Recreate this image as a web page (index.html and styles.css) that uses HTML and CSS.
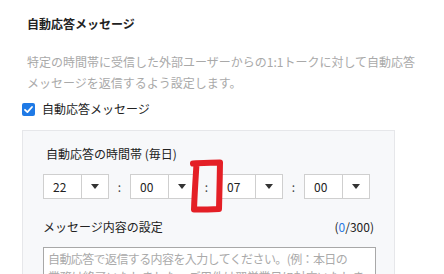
FILE: index.html
```html
<!DOCTYPE html>
<html lang="ja">
<head>
<meta charset="utf-8">
<link rel="stylesheet" href="styles.css">
</head>
<body>
<div class="page">
  <h1 class="title">自動応答メッセージ</h1>
  <p class="desc">特定の時間帯に受信した外部ユーザーからの1:1トークに対して自動応答メッセージを返信するよう設定します。</p>
  <label class="check-row">
    <span class="checkbox"><svg width="13" height="13" viewBox="0 0 13 13"><path d="M3 6.8 L5.4 9.1 L10 4" fill="none" stroke="#fff" stroke-width="1.8" stroke-linecap="round" stroke-linejoin="round"/></svg></span>
    <span class="check-label">自動応答メッセージ</span>
  </label>
  <div class="panel">
    <div class="panel-heading">自動応答の時間帯 (毎日)</div>
    <div class="time-row">
      <div class="select"><span class="val">22</span><span class="arrow"></span></div>
      <span class="colon">:</span>
      <div class="select"><span class="val">00</span><span class="arrow"></span></div>
      <span class="colon">:</span>
      <div class="select"><span class="val">07</span><span class="arrow"></span></div>
      <span class="colon">:</span>
      <div class="select"><span class="val">00</span><span class="arrow"></span></div>
    </div>
    <div class="msg-head">
      <span class="msg-label">メッセージ内容の設定</span>
      <span class="counter">(<span class="count">0</span>/300)</span>
    </div>
    <div class="textarea"><span class="placeholder"><span class="ph-line">自動応答で返信する内容を入力してください。(例：本日の</span><br>業務は終了いたしました。ご用件は翌営業日に対応いたします。)</span></div>
  </div>
</div>
<svg class="annot" width="444" height="274" viewBox="0 0 444 274">
  <path d="M193 163.5 C203 163 212 162.5 220 162.5 C219.8 178 219.3 194 219 209 C211 209.2 202 209.5 194 209.5 C194.5 195 195.5 180 196.5 164" fill="none" stroke="#e41f26" stroke-width="6" stroke-linecap="round" stroke-linejoin="round"/>
</svg>
</body>
</html>
```

FILE: styles.css
```css
* { box-sizing: border-box; }
html, body { margin: 0; padding: 0; background: #fff; }
body {
  font-family: "Noto Sans CJK JP", "Noto Sans", sans-serif;
  font-size: 12px;
  line-height: 16px;
  color: #333;
  width: 444px;
  height: 274px;
  overflow: hidden;
  position: relative;
}
.page { padding: 16px 0 0 22px; }
.title {
  margin: 0 0 0 5px;
  font-size: 12px;
  line-height: 16px;
  font-weight: 700;
  color: #222;
}
.desc {
  margin: 19px 0 0 5px;
  width: 396px;
  line-height: 21px;
  color: #a9a9a9;
}
.check-row {
  display: flex;
  align-items: center;
  gap: 7px;
  margin-top: 8px;
  height: 16px;
}
.checkbox {
  width: 13px;
  height: 13px;
  border-radius: 2px;
  background: #1f7ae6;
  display: flex;
}
.check-label { color: #222; }
.panel {
  margin-top: 13px;
  width: 373px;
  height: 200px;
  background: #f7f8fa;
  border: 1px solid #e6e7ea;
  padding: 15px 18px 0 20px;
}
.panel-heading { padding-left: 3px; color: #222; }
.time-row {
  display: flex;
  margin-top: 12px;
  height: 25px;
}
.select {
  display: flex;
  width: 66px;
  height: 25px;
  background: #fff;
  border: 1px solid #cfcfcf;
}
.val {
  width: 37px;
  padding-left: 9px;
  line-height: 23px;
  color: #222;
}
.arrow {
  flex: 1;
  border-left: 1px solid #cfcfcf;
  display: flex;
  align-items: center;
  justify-content: center;
}
.arrow::before {
  content: "";
  width: 0;
  height: 0;
  border-left: 4px solid transparent;
  border-right: 4px solid transparent;
  border-top: 5px solid #333;
}
.colon {
  width: 21px;
  text-align: center;
  line-height: 25px;
  color: #444;
}
.msg-head {
  display: flex;
  justify-content: space-between;
  margin-top: 20px;
  padding-right: 2px;
  color: #222;
}
.count { color: #2a7ae2; }
.textarea {
  margin-top: 12px;
  height: 60px;
  background: #fff;
  border: 1px solid #a8a8a8;
  padding: 2px 2px 2px 4px;
  line-height: 18px;
  overflow: hidden;
}
.placeholder { color: #aaa; letter-spacing: -0.3px; }
.ph-line { white-space: nowrap; letter-spacing: -0.6px; }
.annot {
  position: absolute;
  left: 0;
  top: 0;
  pointer-events: none;
}
```
